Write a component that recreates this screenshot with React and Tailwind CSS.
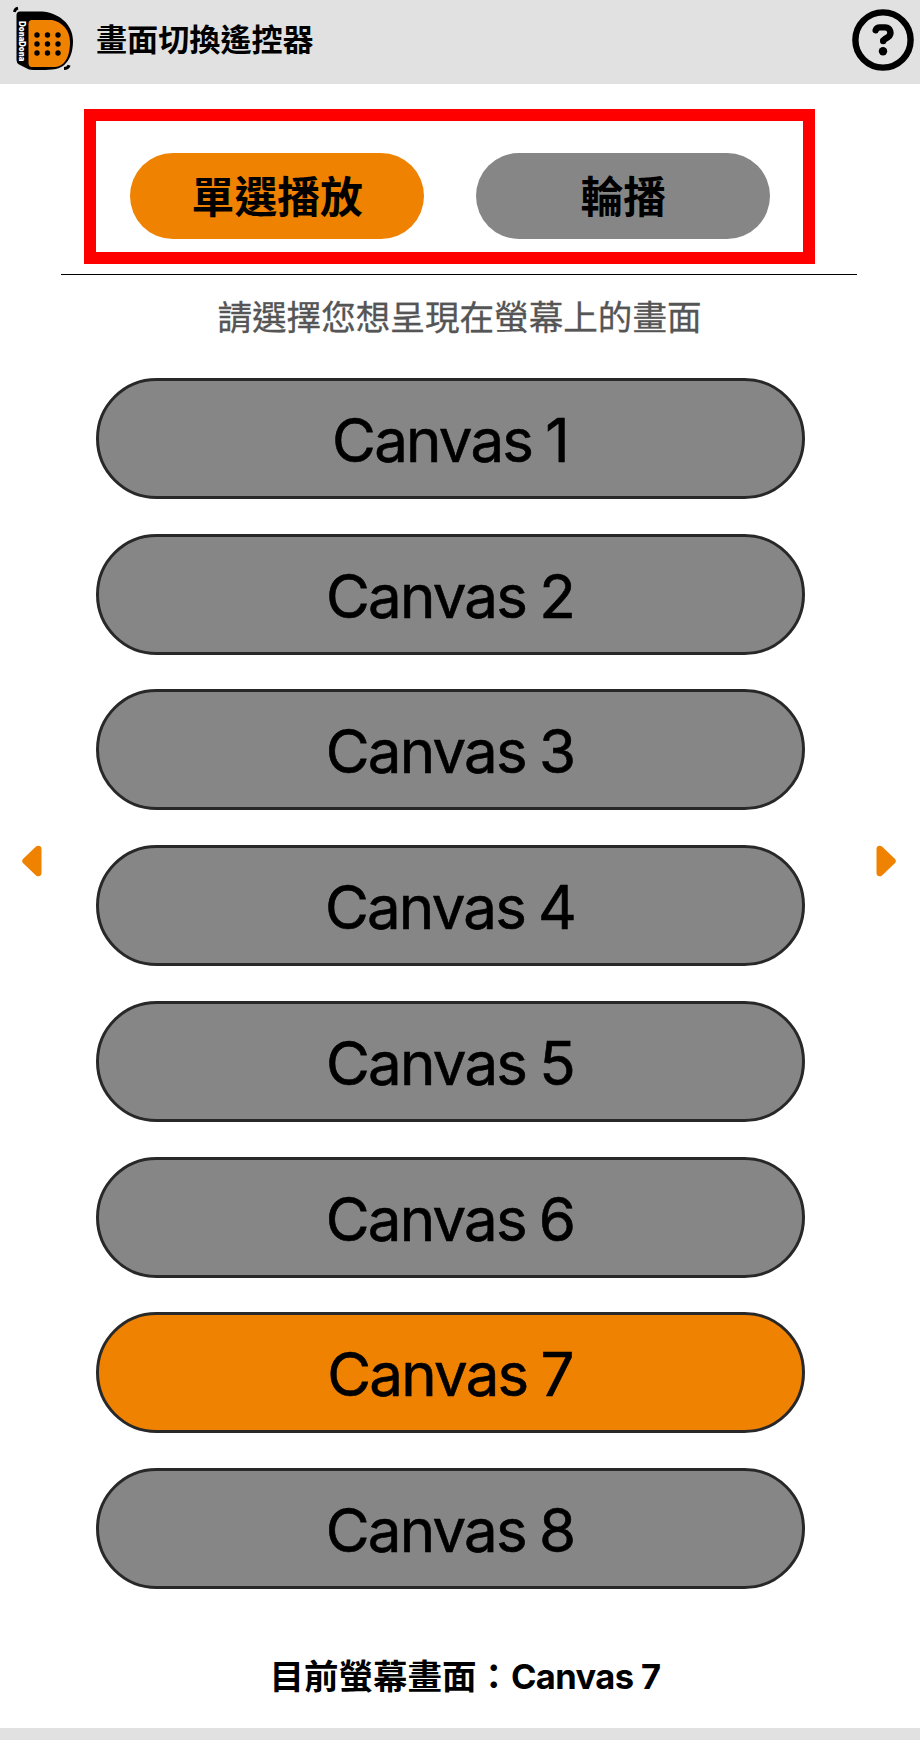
import { useState } from "react";

const canvases = [1, 2, 3, 4, 5, 6, 7, 8].map((n) => `Canvas ${n}`);

const Logo = () => (
  <svg className="block h-[84px] w-[84px]" viewBox="0 0 84 84">
    {/* corner marks */}
    <path d="M14.4 12 Q15 8.8 18 8.2" fill="none" stroke="#000" strokeWidth="2.8" />
    <path d="M64 68.6 Q67.8 68.6 69.2 65.2" fill="none" stroke="#000" strokeWidth="3" />
    <path
      d="M20 11.5 H42 C57 12.5 73 23 73 41 C73 57 66 69 52 69.5 C43 70.3 34 70.3 29 69.5 L19 64.5 Q16.5 63 16.5 60 V15 Q16.5 11.5 20 11.5 Z"
      fill="#000"
    />
    <path
      d="M32 20 H52 C62 22 70 30 70 42 C70 55 66 66 55 67 H32 Q28 67 28.5 62 V24 Q28.5 20 32 20 Z"
      fill="#ef8200"
    />
    {[35, 44, 53].map((y) =>
      [37, 47.5, 58].map((x) => <circle key={`${x}-${y}`} cx={x} cy={y} r="2.7" fill="#000" />)
    )}
    <text
      transform="translate(18.8 21.3) rotate(90)"
      fontSize="8.5"
      fontWeight="900"
      fill="#fff"
      textLength="40"
      lengthAdjust="spacingAndGlyphs"
    >
      DonaDona
    </text>
  </svg>
);

const HelpIcon = () => (
  <svg className="block h-[62px] w-[62px]" viewBox="0 0 62 62" fill="none" stroke="#000">
    <circle cx="31" cy="31" r="27.6" strokeWidth="6.4" />
    <path
      d="M23.7 21.2 Q24.6 18.4 28 18.4 H33.4 A5.3 5.3 0 0 1 36.2 28 L32.6 30.2 Q31.2 31 31.2 32"
      strokeWidth="6.4"
      strokeLinecap="round"
      strokeLinejoin="round"
    />
    <circle cx="31" cy="42.3" r="4.2" fill="#000" stroke="none" />
  </svg>
);

const Arrow = ({ flip }) => (
  <svg
    className={flip ? "block h-8 w-5 rotate-180" : "block h-8 w-5"}
    viewBox="0 0 20 32"
    fill="#ef8200"
  >
    <path d="M1.2 13.7 L14 1.6 C16.3 -0.2 19.5 0.8 19.5 4 V28 C19.5 31.2 16.3 32.2 14 30.4 L1.2 18.3 Q-1 16 1.2 13.7 Z" />
  </svg>
);

const Tab = ({ label, active, onClick }) => (
  <button
    onClick={onClick}
    className={`h-[86px] w-[294.4px] rounded-full pt-1 text-[42.8px] leading-none font-bold text-black ${
      active ? "bg-[#ef8200]" : "bg-[#868686]"
    }`}
  >
    {label}
  </button>
);

const App = () => {
  const [mode, setMode] = useState("single");
  const [current, setCurrent] = useState("Canvas 7");

  return (
    <div className="flex h-[1740px] w-[920px] flex-col bg-white font-[Inter,'Noto_Sans_CJK_TC',sans-serif] text-black">
      <header className="flex h-[84px] shrink-0 items-center bg-[#e1e1e1] pr-[6px]">
        <Logo />
        <h1 className="ml-3 pb-[2px] text-[31.1px] leading-none font-bold">畫面切換遙控器</h1>
        <button className="mt-[-4px] ml-auto">
          <HelpIcon />
        </button>
      </header>

      <div className="mt-[25px] ml-[84px] flex h-[155px] w-[731px] shrink-0 gap-[51.6px] border-[12px] border-[#ff0000] pt-8 pl-[34px]">
        <Tab label="單選播放" active={mode === "single"} onClick={() => setMode("single")} />
        <Tab label="輪播" active={mode === "loop"} onClick={() => setMode("loop")} />
      </div>

      <div className="mt-[10px] ml-[61px] h-px w-[796px] shrink-0 bg-black" />
      <p className="mt-6 mr-px h-[37px] shrink-0 text-center text-[34.6px] leading-9 text-[#555] [-webkit-text-stroke:0.3px_#555]">
        請選擇您想呈現在螢幕上的畫面
      </p>

      <main className="mt-[42px] flex h-[1211px] shrink-0 items-center justify-between pr-6 pl-[22px]">
        <button className="mt-[-245px]">
          <Arrow />
        </button>
        <div className="mr-[18px] flex w-[709px] flex-col gap-[34.75px]">
          {canvases.map((name) => (
            <button
              key={name}
              onClick={() => setCurrent(name)}
              className={`h-[121px] rounded-full border-[3px] border-[#282828] pt-[3px] text-[60px] leading-none tracking-[-1.8px] [word-spacing:-2px] [-webkit-text-stroke:0.6px_#000] ${
                name === current ? "bg-[#ef8200]" : "bg-[#868686]"
              }`}
            >
              {name}
            </button>
          ))}
        </div>
        <button className="mt-[-245px]">
          <Arrow flip />
        </button>
      </main>

      <p className="mt-[68px] ml-[10px] text-center text-[34.5px] leading-10 font-bold">
        目前螢幕畫面：<span className="tracking-[-0.6px]">{current}</span>
      </p>
      <footer className="mt-auto h-3 shrink-0 bg-[#e1e1e1]" />
    </div>
  );
};

export default App;
